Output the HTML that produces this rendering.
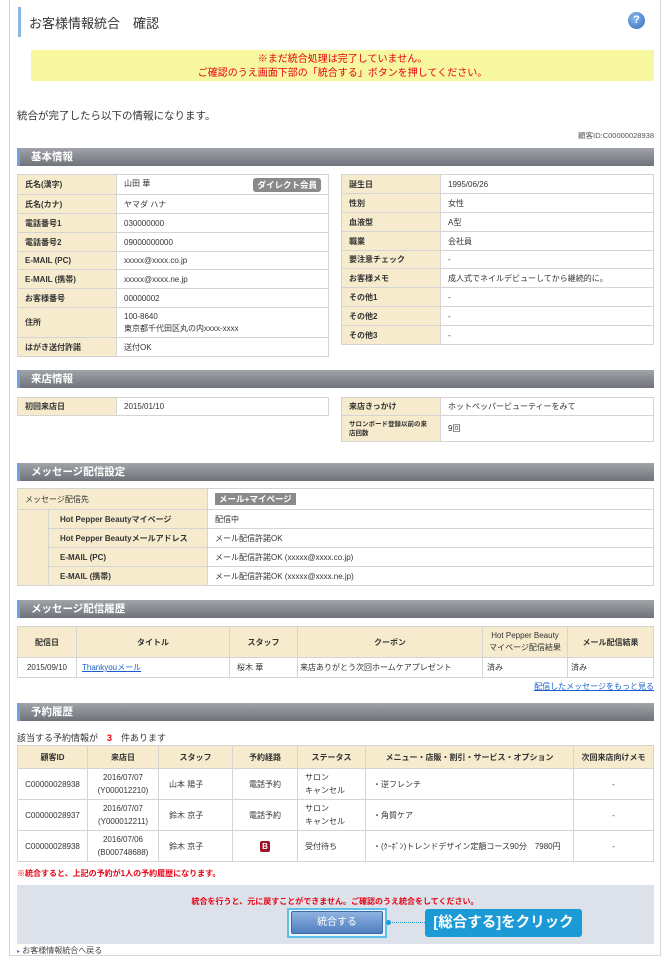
<!DOCTYPE html>
<html><head><meta charset="utf-8"><style>
*{margin:0;padding:0;box-sizing:border-box}
body{width:670px;height:959px;background:#fff;font-family:"Liberation Sans","Noto Sans CJK JP",sans-serif;color:#333;font-size:8px;position:relative;overflow:hidden}
.a{position:absolute}
.frame{left:9px;top:-2px;width:652px;height:958px;border:1px solid #d5d5d5}
.sh{position:absolute;left:17px;width:637px;height:18px;background:linear-gradient(#a0a3a8,#6f7379);border-left:3px solid #6da3e0;color:#fff;font-size:10.5px;font-weight:bold;line-height:18px;padding-left:11px}
table{position:absolute;border-collapse:collapse;font-size:8px}
td,th{border:1px solid #d4d4d4;padding:0 7px;vertical-align:middle}
th{background:#f7ebcd;font-weight:bold;text-align:left}
.c th{text-align:center}
.c td{text-align:center}
.red{color:#e60012}
.badge{background:#8a8a8a;color:#fff;font-weight:bold;border-radius:3px;padding:1px 4px;font-size:8.5px}
</style></head><body>
<div class="a frame"></div>
<div class="a" style="left:18px;top:7px;width:3px;height:30px;background:#8fb5e3"></div>
<div class="a" style="left:29px;top:13px;font-size:13px;color:#333">お客様情報統合　確認</div>
<div class="a" style="left:628px;top:12px;width:17px;height:17px;border-radius:50%;background:radial-gradient(circle at 40% 35%,#8ab8ee,#2f6cb8);color:#fff;font-weight:bold;font-size:11px;text-align:center;line-height:17px">?</div>
<div class="a" style="left:31px;top:50px;width:623px;height:31px;background:#f6f79e;text-align:center;color:#e60012;font-size:10px;line-height:14px;padding-top:3px">※まだ統合処理は完了していません。<br>ご確認のうえ画面下部の「統合する」ボタンを押してください。</div>
<div class="a" style="left:17px;top:108px;font-size:10.5px">統合が完了したら以下の情報になります。</div>
<div class="a" style="right:16px;top:130px;font-size:7.5px;color:#555">顧客ID:C00000028938</div>

<div class="sh" style="top:148px">基本情報</div>
<table style="left:17px;top:174px;width:312px">
<col style="width:99px"><col>
<tr style="height:20px"><th>氏名(漢字)</th><td>山田 華<span class="badge" style="float:right">ダイレクト会員</span></td></tr>
<tr style="height:19px"><th>氏名(カナ)</th><td>ヤマダ ハナ</td></tr>
<tr style="height:19px"><th>電話番号1</th><td>030000000</td></tr>
<tr style="height:19px"><th>電話番号2</th><td>09000000000</td></tr>
<tr style="height:18px"><th>E-MAIL (PC)</th><td>xxxxx@xxxx.co.jp</td></tr>
<tr style="height:19px"><th>E-MAIL (携帯)</th><td>xxxxx@xxxx.ne.jp</td></tr>
<tr style="height:19px"><th>お客様番号</th><td>00000002</td></tr>
<tr style="height:30px"><th>住所</th><td style="line-height:12px">100-8640<br>東京都千代田区丸の内xxxx-xxxx</td></tr>
<tr style="height:19px"><th>はがき送付許諾</th><td>送付OK</td></tr>
</table>
<table style="left:341px;top:174px;width:313px">
<col style="width:99px"><col>
<tr style="height:19px"><th>誕生日</th><td>1995/06/26</td></tr>
<tr style="height:19px"><th>性別</th><td>女性</td></tr>
<tr style="height:19px"><th>血液型</th><td>A型</td></tr>
<tr style="height:19px"><th>職業</th><td>会社員</td></tr>
<tr style="height:18px"><th>要注意チェック</th><td>-</td></tr>
<tr style="height:19px"><th>お客様メモ</th><td>成人式でネイルデビューしてから継続的に。</td></tr>
<tr style="height:19px"><th>その他1</th><td>-</td></tr>
<tr style="height:19px"><th>その他2</th><td>-</td></tr>
<tr style="height:19px"><th>その他3</th><td>-</td></tr>
</table>

<div class="sh" style="top:370px">来店情報</div>
<table style="left:17px;top:397px;width:312px"><col style="width:99px"><col>
<tr style="height:18px"><th>初回来店日</th><td>2015/01/10</td></tr></table>
<table style="left:341px;top:397px;width:313px"><col style="width:99px"><col>
<tr style="height:18px"><th>来店きっかけ</th><td>ホットペッパービューティーをみて</td></tr>
<tr style="height:26px"><th style="font-size:6.5px;line-height:9px">サロンボード登録以前の来店回数</th><td>9回</td></tr></table>

<div class="sh" style="top:463px">メッセージ配信設定</div>
<table style="left:17px;top:488px;width:637px"><col style="width:31px"><col style="width:159px"><col>
<tr style="height:21px"><th colspan="2" style="font-weight:normal">メッセージ配信先</th><td><span class="badge" style="border-radius:0">メール+マイページ</span></td></tr>
<tr style="height:19px"><th rowspan="4"></th><th style="padding-left:11px">Hot Pepper Beautyマイページ</th><td>配信中</td></tr>
<tr style="height:19px"><th style="padding-left:11px">Hot Pepper Beautyメールアドレス</th><td>メール配信許諾OK</td></tr>
<tr style="height:19px"><th style="padding-left:11px">E-MAIL (PC)</th><td>メール配信許諾OK (xxxxx@xxxx.co.jp)</td></tr>
<tr style="height:19px"><th style="padding-left:11px">E-MAIL (携帯)</th><td>メール配信許諾OK (xxxxx@xxxx.ne.jp)</td></tr>
</table>

<div class="sh" style="top:600px">メッセージ配信履歴</div>
<table class="c" style="left:17px;top:626px;width:637px">
<col style="width:59px"><col style="width:153px"><col style="width:68px"><col style="width:185px"><col style="width:85px"><col>
<tr style="height:31px"><th>配信日</th><th>タイトル</th><th>スタッフ</th><th>クーポン</th><th style="line-height:12px;font-weight:normal;padding:0 3px">Hot Pepper Beauty<br>マイページ配信結果</th><th>メール配信結果</th></tr>
<tr style="height:20px"><td>2015/09/10</td><td style="text-align:left;padding-left:5px"><span style="color:#1a5fc8;text-decoration:underline">Thankyouメール</span></td><td style="text-align:left">桜木 華</td><td style="text-align:left;padding-left:2px">来店ありがとう次回ホームケアプレゼント</td><td style="text-align:left;padding-left:4px">済み</td><td style="text-align:left;padding-left:3px">済み</td></tr>
</table>
<div class="a" style="right:16px;top:681px;color:#1a5fc8;text-decoration:underline">配信したメッセージをもっと見る</div>

<div class="sh" style="top:703px">予約履歴</div>
<div class="a" style="left:17px;top:731px;font-size:9px">該当する予約情報が　<b class="red">3</b>　件あります</div>
<table class="c" style="left:17px;top:745px;width:637px">
<col style="width:70px"><col style="width:71px"><col style="width:74px"><col style="width:65px"><col style="width:68px"><col style="width:208px"><col>
<tr style="height:23px"><th>顧客ID</th><th>来店日</th><th>スタッフ</th><th>予約経路</th><th>ステータス</th><th>メニュー・店販・割引・サービス・オプション</th><th>次回来店向けメモ</th></tr>
<tr style="height:31px"><td>C00000028938</td><td style="line-height:13px">2016/07/07<br>(Y000012210)</td><td style="text-align:left;padding-left:10px">山本 陽子</td><td>電話予約</td><td style="text-align:left;line-height:13px">サロン<br>キャンセル</td><td style="text-align:left">・逆フレンチ</td><td>-</td></tr>
<tr style="height:31px"><td>C00000028937</td><td style="line-height:13px">2016/07/07<br>(Y000012211)</td><td style="text-align:left;padding-left:10px">鈴木 京子</td><td>電話予約</td><td style="text-align:left;line-height:13px">サロン<br>キャンセル</td><td style="text-align:left">・角質ケア</td><td>-</td></tr>
<tr style="height:31px"><td>C00000028938</td><td style="line-height:13px">2016/07/06<br>(B000748688)</td><td style="text-align:left;padding-left:10px">鈴木 京子</td><td><span style="display:inline-block;width:10px;height:11px;background:#a0122a;color:#fff;border-radius:2px;font-size:8px;font-weight:bold;line-height:11px">B</span></td><td style="text-align:left">受付待ち</td><td style="text-align:left">・(ｸｰﾎﾟﾝ)トレンドデザイン定額コース90分　7980円</td><td>-</td></tr>
</table>
<div class="a red" style="left:17px;top:868px;font-weight:bold;font-size:8px">※統合すると、上記の予約が1人の予約履歴になります。</div>
<div class="a" style="left:17px;top:885px;width:637px;height:59px;background:#dde1ea"></div>
<div class="a red" style="left:0;width:670px;text-align:center;top:896px;font-size:8px;font-weight:bold">統合を行うと、元に戻すことができません。ご確認のうえ統合をしてください。</div>
<div class="a" style="left:287px;top:908px;width:100px;height:30px;border:2px solid #5cc1e8;background:#e9f5fb"></div>
<div class="a" style="left:291px;top:911px;width:92px;height:23px;background:linear-gradient(#8fb2e0,#4f7ec0);border:1px solid #3f69a5;border-radius:2px;color:#fff;font-size:10px;text-align:center;line-height:21px">統合する</div>
<div class="a" style="left:387px;top:922px;width:38px;border-top:1px dotted #1b9ad6"></div>
<div class="a" style="left:386px;top:920px;width:5px;height:5px;border-radius:50%;background:#1b9ad6"></div>
<div class="a" style="left:425px;top:909px;width:157px;height:28px;background:#1b9ad6;border-radius:3px;color:#fff;font-weight:bold;font-size:14.5px;line-height:28px;text-align:center">[総合する]をクリック</div>
<div class="a" style="left:17px;top:945px;font-size:8px;color:#444"><span style="color:#4a7cc0;font-size:6px">▸</span> お客様情報統合へ戻る</div>
</body></html>
